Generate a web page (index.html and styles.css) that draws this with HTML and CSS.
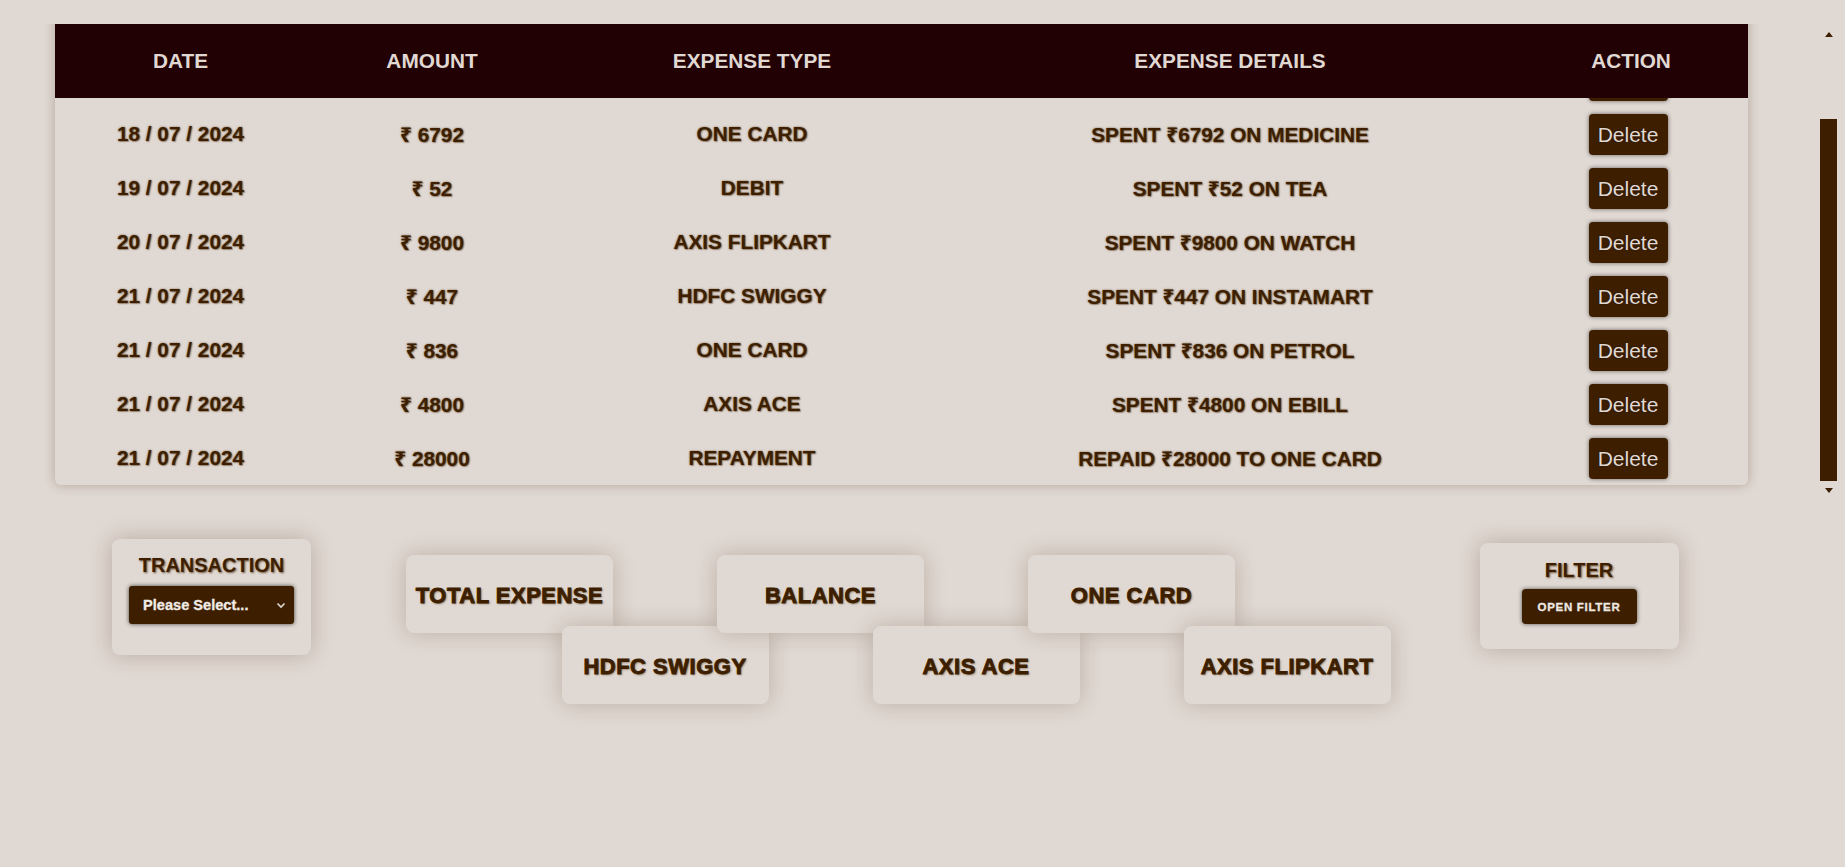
FILE: index.html
```html
<!DOCTYPE html>
<html lang="en">
<head>
<meta charset="utf-8">
<title>Expenses</title>
<link rel="stylesheet" href="styles.css">
</head>
<body>
<div class="table-frame">
  <div class="table-scroll">
    <table class="expenses">
      <colgroup>
        <col class="c-date"><col class="c-amount"><col class="c-type"><col class="c-details"><col class="c-action">
      </colgroup>
      <thead>
        <tr><th>DATE</th><th>AMOUNT</th><th>EXPENSE TYPE</th><th>EXPENSE DETAILS</th><th>ACTION</th></tr>
      </thead>
      <tbody>
        <tr><td>16 / 07 / 2024</td><td>₹ 1200</td><td>DEBIT</td><td>SPENT ₹1200 ON GROCERIES</td><td><button class="del">Delete</button></td></tr>
        <tr><td>17 / 07 / 2024</td><td>₹ 350</td><td>HDFC SWIGGY</td><td>SPENT ₹350 ON FOOD</td><td><button class="del">Delete</button></td></tr>
        <tr><td>18 / 07 / 2024</td><td>₹ 6792</td><td>ONE CARD</td><td>SPENT ₹6792 ON MEDICINE</td><td><button class="del">Delete</button></td></tr>
        <tr><td>19 / 07 / 2024</td><td>₹ 52</td><td>DEBIT</td><td>SPENT ₹52 ON TEA</td><td><button class="del">Delete</button></td></tr>
        <tr><td>20 / 07 / 2024</td><td>₹ 9800</td><td>AXIS FLIPKART</td><td>SPENT ₹9800 ON WATCH</td><td><button class="del">Delete</button></td></tr>
        <tr><td>21 / 07 / 2024</td><td>₹ 447</td><td>HDFC SWIGGY</td><td>SPENT ₹447 ON INSTAMART</td><td><button class="del">Delete</button></td></tr>
        <tr><td>21 / 07 / 2024</td><td>₹ 836</td><td>ONE CARD</td><td>SPENT ₹836 ON PETROL</td><td><button class="del">Delete</button></td></tr>
        <tr><td>21 / 07 / 2024</td><td>₹ 4800</td><td>AXIS ACE</td><td>SPENT ₹4800 ON EBILL</td><td><button class="del">Delete</button></td></tr>
        <tr><td>21 / 07 / 2024</td><td>₹ 28000</td><td>REPAYMENT</td><td>REPAID ₹28000 TO ONE CARD</td><td><button class="del">Delete</button></td></tr>
      </tbody>
    </table>
  </div>
  <div class="scrollbar" aria-hidden="true">
    <div class="sb-btn"><span class="tri-up"></span></div>
    <div class="sb-track"><div class="sb-thumb"></div></div>
    <div class="sb-btn"><span class="tri-down"></span></div>
  </div>
</div>

<section class="panel">
  <div class="box transaction">
    <h3 class="box-title">TRANSACTION</h3>
    <div class="select-wrap">
      <select class="tx-select"><option>Please Select...</option></select>
      <svg class="chev" width="10" height="7" viewBox="0 0 10 7"><path d="M1.5 1.5 L5 5 L8.5 1.5" fill="none" stroke="#e0d8d2" stroke-width="1.6"/></svg>
    </div>
  </div>

  <div class="stats">
    <div class="stat">TOTAL EXPENSE</div>
    <div class="stat low">HDFC SWIGGY</div>
    <div class="stat">BALANCE</div>
    <div class="stat low">AXIS ACE</div>
    <div class="stat">ONE CARD</div>
    <div class="stat low">AXIS FLIPKART</div>
  </div>

  <div class="box filter">
    <h3 class="box-title">FILTER</h3>
    <button class="open-filter">OPEN FILTER</button>
  </div>
</section>
</body>
</html>
```

FILE: styles.css
```css
* { box-sizing: border-box; }

html, body { background: #e0d8d2; }

body {
  margin: 8px;
  font-family: "Liberation Sans", "Noto Sans", "DejaVu Sans", sans-serif;
  color: #3d1f00;
}

/* ---------- table ---------- */
.table-frame {
  display: flex;
  margin-top: 16px;
  height: 475px;
}

.table-scroll {
  flex: 1;
  min-width: 0;
  height: 100%;
  overflow-y: auto;
  overflow-x: hidden;
  display: flex;
  flex-direction: column-reverse;
  align-items: flex-start;
  scrollbar-width: none;
}

.expenses {
  flex: none;
  width: 1693px;
  margin: 0 0 14px 47px;
  border-collapse: separate;
  border-spacing: 0;
  table-layout: fixed;
  border-radius: 6px;
  background: #e0d8d2;
  box-shadow: 0 0 12px rgba(70, 40, 20, 0.28);
}

.c-date { width: 251px; }
.c-amount { width: 252px; }
.c-type { width: 388px; }
.c-details { width: 568px; }
.c-action { width: 234px; }

.expenses th {
  position: sticky;
  top: 0;
  z-index: 2;
  height: 74px;
  padding: 0;
  background: #210103;
  color: #e0d8d2;
  font-size: 20.8px;
  font-weight: 700;
  text-align: center;
}

.expenses td {
  height: 54px;
  padding: 0;
  text-align: center;
  vertical-align: middle;
  font-size: 20.8px;
  font-weight: 700;
  color: #3d1f00;
  text-shadow: 0 0 2px rgba(61, 31, 0, 0.7), 1px 1px 1px rgba(61, 31, 0, 0.3);
}

.del {
  margin: 1px 6px 0 0;
  height: 41px;
  width: 79px;
  padding: 0;
  border: none;
  border-radius: 4px;
  background: #3d1f00;
  color: #e0d8d2;
  font-family: "Liberation Sans", sans-serif;
  font-size: 21px;
  box-shadow: 0 0 4px rgba(0, 0, 0, 0.55);
  text-shadow: 0 0 2px rgba(0, 0, 0, 0.5);
}

/* drawn scrollbar */
.scrollbar {
  flex: none;
  width: 17px;
  margin-top: 2px;
  display: flex;
  flex-direction: column;
}

.sb-btn {
  flex: none;
  height: 17px;
  display: flex;
  align-items: center;
  justify-content: center;
}

.tri-up {
  width: 0;
  height: 0;
  border-left: 4.5px solid transparent;
  border-right: 4.5px solid transparent;
  border-bottom: 5px solid #3d1f00;
}

.tri-down {
  width: 0;
  height: 0;
  border-left: 4.5px solid transparent;
  border-right: 4.5px solid transparent;
  border-top: 5px solid #3d1f00;
}

.sb-track {
  flex: 1;
  padding-top: 76px;
}

.sb-thumb {
  height: 362px;
  background: #3d1f00;
}

/* ---------- bottom panel ---------- */
.panel {
  display: flex;
  align-items: flex-start;
  margin-top: 40px;
  padding-left: 104px;
  padding-bottom: 40px;
}

.box {
  flex: none;
  width: 199px;
  display: flex;
  flex-direction: column;
  align-items: center;
  background: #e0d8d2;
  border-radius: 8px;
  box-shadow: 0 0 22px rgba(70, 40, 20, 0.25);
}

.box-title {
  margin: 0;
  font-size: 20px;
  line-height: 22px;
  font-weight: 700;
  color: #3d1f00;
  text-shadow: 1px 1px 2px rgba(61, 31, 0, 0.7);
}

.transaction {
  height: 116px;
  padding-top: 15px;
}

.select-wrap {
  position: relative;
  margin-top: 10px;
  width: 165px;
  height: 38px;
}

.tx-select {
  appearance: none;
  -webkit-appearance: none;
  width: 100%;
  height: 100%;
  padding: 0 0 0 14px;
  border: none;
  border-radius: 3px;
  background: #3d1f00;
  color: #f1ebe6;
  font-family: "Liberation Sans", sans-serif;
  font-size: 14.6px;
  font-weight: 700;
  -webkit-text-stroke: 0.3px #f1ebe6;
  box-shadow: 0 0 4px rgba(0, 0, 0, 0.7);
}

.chev {
  position: absolute;
  right: 8px;
  top: 16px;
  pointer-events: none;
}

.stats {
  flex: none;
  display: flex;
  align-items: flex-start;
  margin-left: 95px;
  margin-top: 16px;
}

.stat {
  flex: none;
  width: 207px;
  height: 78px;
  padding-top: 4px;
  display: flex;
  align-items: center;
  justify-content: center;
  background: #e0d8d2;
  border-radius: 8px;
  box-shadow: 0 0 22px rgba(70, 40, 20, 0.22);
  font-size: 22px;
  font-weight: 700;
  letter-spacing: 0.5px;
  color: #3d1f00;
  -webkit-text-stroke: 0.9px #3d1f00;
  text-shadow: 1px 1px 2px rgba(61, 31, 0, 0.55);
}

.stat + .stat { margin-left: -51.5px; }
.stat.low { margin-top: 71px; padding-top: 3px; }

.filter {
  height: 106px;
  margin-left: 89px;
  margin-top: 4px;
  padding-top: 16px;
}

.open-filter {
  margin-top: 8px;
  width: 115px;
  height: 35px;
  padding: 0;
  border: none;
  border-radius: 4px;
  background: #3d1f00;
  color: #efe8e2;
  font-family: "Liberation Sans", sans-serif;
  font-size: 11.5px;
  font-weight: 700;
  letter-spacing: 0.7px;
  -webkit-text-stroke: 0.3px #efe8e2;
  box-shadow: 0 0 4px rgba(0, 0, 0, 0.6);
}
```
